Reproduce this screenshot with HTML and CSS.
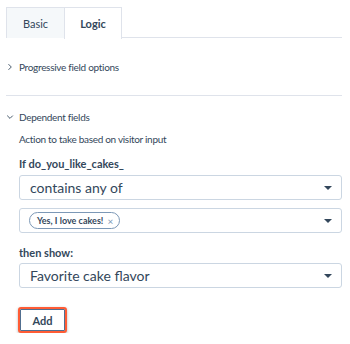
FILE: index.html
```html
<!DOCTYPE html>
<html>
<head>
<meta charset="utf-8">
<link rel="stylesheet" href="styles.css">
</head>
<body>
<div class="page">
  <div class="tabs">
    <div class="tab">Basic</div>
    <div class="tab active">Logic</div>
  </div>
  <div class="section collapsed">
    <div class="toggle">
      <svg class="chev" width="8" height="8" viewBox="0 0 8 8"><path d="M2.5 1.2 L5.3 4 L2.5 6.8" fill="none" stroke="#33475b" stroke-width="0.9"/></svg>
      <span>Progressive field options</span>
    </div>
  </div>
  <div class="section open">
    <div class="toggle">
      <svg class="chev" width="8" height="8" viewBox="0 0 8 8"><path d="M1.2 2.6 L4 5.4 L6.8 2.6" fill="none" stroke="#33475b" stroke-width="0.9"/></svg>
      <span>Dependent fields</span>
    </div>
    <div class="body">
      <p class="help">Action to take based on visitor input</p>
      <div class="label">If do_you_like_cakes_</div>
      <div class="select">
        <span>contains any of</span>
        <span class="caret"></span>
      </div>
      <div class="select multi">
        <span class="tag">Yes, I love cakes! <span class="x">×</span></span>
        <span class="caret"></span>
      </div>
      <div class="label then">then show:</div>
      <div class="select">
        <span>Favorite cake flavor</span>
        <span class="caret"></span>
      </div>
      <button class="add">Add</button>
    </div>
  </div>
</div>
</body>
</html>
```

FILE: styles.css
```css
* { box-sizing: border-box; }
html, body { margin: 0; padding: 0; background: #fff; }
body {
  font-family: "Lato", "Noto Sans", sans-serif;
  color: #33475b;
  font-size: 10px;
}
.page { padding: 7px 8px 0 6px; width: 350px; }
.tabs {
  display: flex;
  border-bottom: 1px solid #dfe3eb;
  height: 31px;
}
.tab {
  width: 58px;
  height: 31px;
  display: flex;
  align-items: center;
  justify-content: center;
  background: #f5f8fa;
  border: 1px solid #dfe3eb;
  border-bottom: none;
  border-right: none;
  font-size: 11px;
  color: #33475b;
}
.tab.active {
  background: #fff;
  border-right: 1px solid #dfe3eb;
  font-weight: 700;
  height: 32px;
  margin-bottom: -1px;
}
.toggle {
  display: flex;
  align-items: center;
  height: 14px;
  gap: 5px;
  letter-spacing: -0.3px;
  line-height: 14px;
}
.chev { flex: none; }
.section.collapsed {
  padding: 22px 0 21px;
  border-bottom: 1px solid #dfe3eb;
}
.section.open { padding-top: 14px; }
.body { padding-left: 13px; }
.help { margin: 8px 0 0; line-height: 14px; letter-spacing: -0.3px; }
.label { font-weight: 700; font-size: 11px; margin-top: 11px; line-height: 14px; }
.select {
  margin-top: 4px;
  height: 25px;
  border: 1px solid #cbd6e2;
  border-radius: 3px;
  background: #fff;
  display: flex;
  align-items: center;
  justify-content: space-between;
  padding: 0 9px 0 10px;
  font-size: 14px;
  width: 323px;
}
.select.multi { margin-top: 8px; padding-left: 9px; }
.caret {
  width: 0; height: 0;
  border-left: 4px solid transparent;
  border-right: 4px solid transparent;
  border-top: 4px solid #33475b;
}
.tag {
  font-size: 9px;
  font-weight: 700;
  border: 1px solid #7c98b6;
  border-radius: 9px;
  height: 17px;
  padding: 0 6px 0 7px;
  display: inline-flex;
  align-items: center;
  gap: 4px;
  background: #fff;
}
.tag .x { font-weight: 400; color: #7c98b6; font-size: 10px; }
.label.then { margin-top: 13px; }
.label.then + .select { margin-top: 3px; }
.add {
  display: block;
  margin: 19px 0 0 -1px;
  width: 49px;
  height: 26px;
  border: 2px solid #ff5c35;
  border-radius: 3px;
  background: #fff;
  font-family: inherit;
  font-weight: 700;
  font-size: 11px;
  color: #33475b;
  box-shadow: inset 0 0 0 1px #516f90, 0 1px 3px rgba(0,0,0,0.3);
}
```
